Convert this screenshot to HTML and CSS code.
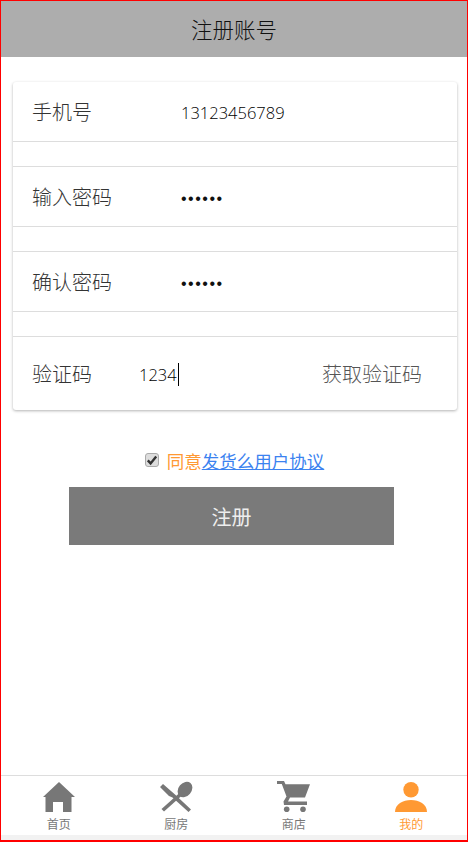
FILE: index.html
```html
<!DOCTYPE html>
<html lang="zh-CN">
<head>
  <meta charset="UTF-8">
  <meta name="viewport" content="width=device-width, initial-scale=1.0">
  <title>注册账号</title>
  <link rel="stylesheet" href="styles.css">
</head>
<body>
  <div class="page">
    <header class="topbar">注册账号</header>
    <main class="content">
      <!-- 表单 -->
      <form class="card">
        <div class="row">
          <label class="row-label">手机号</label>
          <span class="row-value">13123456789</span>
        </div>
        <div class="spacer"></div>
        <div class="row">
          <label class="row-label">输入密码</label>
          <span class="row-value dots">••••••</span>
        </div>
        <div class="spacer"></div>
        <div class="row">
          <label class="row-label">确认密码</label>
          <span class="row-value dots">••••••</span>
        </div>
        <div class="spacer"></div>
        <div class="row row-code">
          <label class="row-label">验证码</label>
          <span class="code-value">1234<i class="caret"></i></span>
          <span class="get-code">获取验证码</span>
        </div>
      </form>
      <!-- 协议 -->
      <div class="agree">
        <span class="check">
          <svg viewBox="0 0 14 14" width="14" height="14"><path d="M2.8 7.4 5.6 10.4 11.2 3.6" fill="none" stroke="#333" stroke-width="2.4"/></svg>
        </span>
        <span class="agree-text">同意<a href="#">发货么用户协议</a></span>
      </div>
      <button class="submit" type="button">注册</button>
    </main>
    <!-- 底部导航 -->
    <nav class="tabbar">
      <a class="tab">
        <svg viewBox="0 -1 32 31" width="32" height="31"><path d="M16 0 32 15H28.500V30H20V20H10V30H2.500V15H0Z"/></svg>
        <span>首页</span>
      </a>
      <a class="tab">
        <svg viewBox="0 -1 33 31" width="33" height="31"><path d="M0 5 3 2 15 12.500 31 27.500 28.500 30 12.500 15.500 9 14Z"/><path d="M1.500 27 20 10.500 22.500 13 4 29.500Z"/><ellipse cx="25" cy="7.500" rx="6.500" ry="8.500" transform="rotate(40 25 7.500)"/></svg>
        <span>厨房</span>
      </a>
      <a class="tab">
        <svg viewBox="0 0 33 31" width="33" height="31"><path d="M0 0H7L8.500 3.300H33L28 16.500H13L11 20.500H30V24H7L6.500 20.500 9.500 15.500 4.800 3H0Z"/><circle cx="9.700" cy="28.200" r="2.800"/><circle cx="26" cy="28.200" r="2.800"/></svg>
        <span>商店</span>
      </a>
      <a class="tab active">
        <svg viewBox="0 -1 32 31" width="32" height="31"><circle cx="16" cy="7.700" r="7.700"/><path d="M0 30C0 22 8 18 16 18S32 22 32 30Z"/></svg>
        <span>我的</span>
      </a>
    </nav>
  </div>
</body>
</html>
```

FILE: styles.css
```css
* {
  box-sizing: border-box;
}

body {
  margin: 0;
  font-family: "Open Sans", "Noto Sans CJK SC", sans-serif;
  font-weight: 300;
  color: #333;
}

.page {
  display: flex;
  flex-direction: column;
  height: 842px;
  border: 1px solid #f00;
  border-bottom-width: 2px;
  background-color: #f2f2f2;
}

.topbar {
  flex: none;
  height: 56px;
  line-height: 58px;
  text-align: center;
  font-size: 21.5px;
  color: #111;
  background-color: #adadad;
}

.content {
  flex: 1;
  padding: 25px 10px 0 12px;
  background-color: #fff;
}

/* 表单 */
.card {
  background-color: #fff;
  border-radius: 3px;
  box-shadow: 0 1px 3px rgba(0, 0, 0, 0.3);
}

.row {
  display: flex;
  align-items: center;
  height: 60px;
  padding-left: 19px;
  border-bottom: 1px solid #ddd;
}

.row-label {
  width: 149px;
  font-size: 20px;
  color: #333;
}

.row-value {
  font-size: 16.5px;
  color: #000;
  padding-top: 2px;
}

.dots {
  font-family: "Liberation Sans", sans-serif;
  font-size: 16px;
  letter-spacing: 1.5px;
  color: #111;
  padding-top: 5px;
}

.spacer {
  height: 25px;
  border-bottom: 1px solid #ddd;
}

.row-code {
  height: 73px;
  border-bottom: none;
}

.row-code .row-label {
  width: 107px;
}

.code-value {
  display: flex;
  align-items: center;
  font-size: 16.5px;
  color: #000;
  padding-top: 2px;
}

.caret {
  width: 1px;
  height: 23px;
  margin-left: 1px;
  background-color: #000;
}

.get-code {
  margin-left: auto;
  margin-right: 35px;
  font-family: "Liberation Serif", "Noto Sans CJK SC", serif;
  font-size: 20px;
  color: #555;
}

/* 协议 */
.agree {
  display: flex;
  justify-content: center;
  align-items: center;
  gap: 8px;
  height: 24px;
  margin-top: 39px;
  padding-right: 1px;
}

.check {
  display: flex;
  width: 14px;
  height: 14px;
  margin-top: -2px;
  border: 1px solid #aaa;
  border-radius: 3px;
  background-color: #ddd;
  overflow: hidden;
}

.check svg {
  flex: none;
  margin: -1px;
}

.agree-text {
  font-size: 17.5px;
  font-weight: 400;
  line-height: 24px;
  color: #f93;
}

.agree-text a {
  color: #3b82f0;
  text-decoration: underline;
}

.submit {
  display: block;
  width: 325px;
  height: 58px;
  margin: 14px 0 0 56px;
  border: none;
  font-family: "Liberation Serif", "Noto Sans CJK SC", serif;
  font-weight: 400;
  font-size: 20px;
  color: #eee;
  background-color: #7a7a7a;
}

/* 底部导航 */
.tabbar {
  flex: none;
  display: flex;
  height: 60px;
  margin-bottom: 5px;
  padding-top: 5px;
  border-top: 1px solid #ddd;
  background-color: #fff;
  overflow: hidden;
}

.tab {
  flex: none;
  width: 117.5px;
  display: flex;
  flex-direction: column;
  align-items: center;
  font-size: 12px;
  font-weight: 400;
  line-height: 16px;
  color: #777;
}

.tab:first-child {
  margin-left: -1px;
}

.tab span {
  margin-top: 5px;
}

.tab svg {
  fill: #777;
}

.tab.active {
  color: #f93;
}

.tab.active svg {
  fill: #f93;
}
```
